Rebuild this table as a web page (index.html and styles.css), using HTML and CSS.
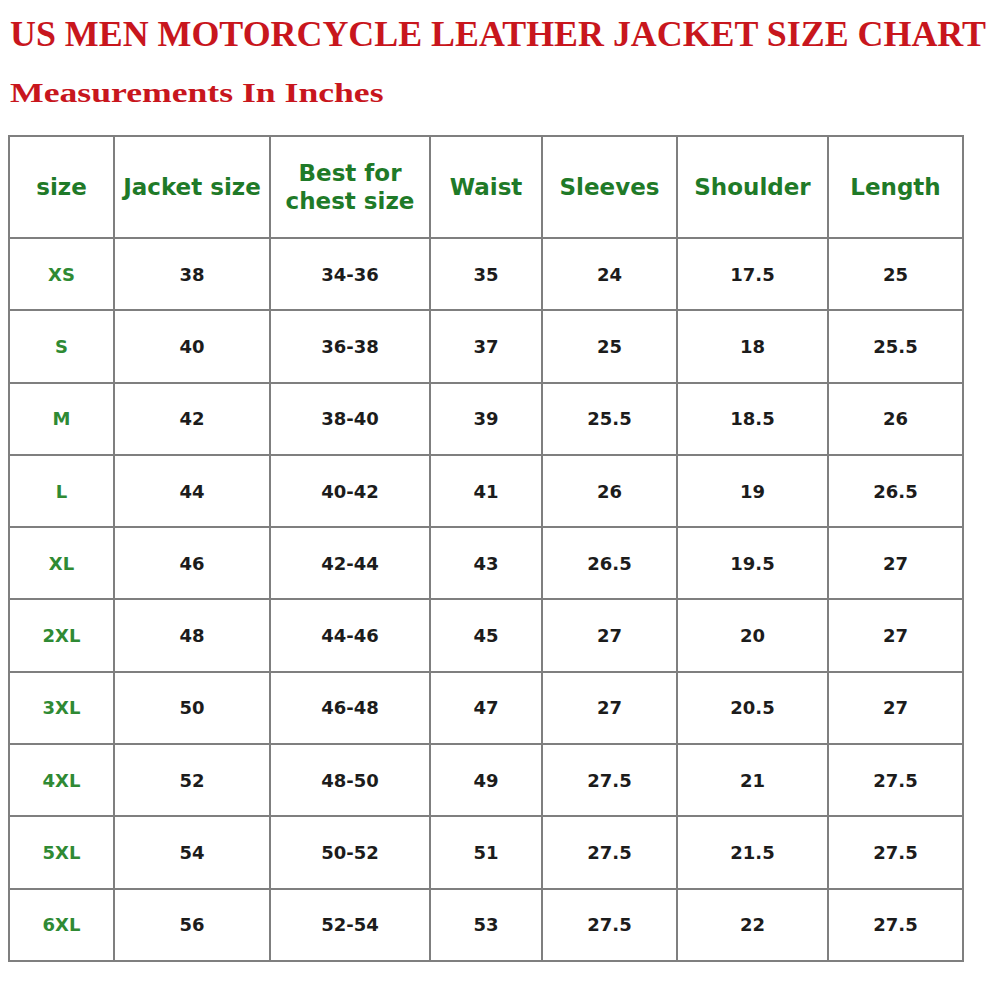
FILE: index.html
```html
<!DOCTYPE html>
<html>
<head>
<meta charset="utf-8">
<link rel="stylesheet" href="styles.css">
</head>
<body>
<div class="page">
  <h1 class="title">US MEN MOTORCYCLE LEATHER JACKET SIZE CHART</h1>
  <h2 class="subtitle"><span class="subtitle-text">Measurements In Inches</span></h2>
  <table class="chart">
    <colgroup>
      <col class="c1"><col class="c2"><col class="c3"><col class="c4"><col class="c5"><col class="c6"><col class="c7">
    </colgroup>
    <thead>
      <tr class="head-row">
        <th>size</th><th>Jacket size</th><th>Best for<br>chest size</th><th>Waist</th><th>Sleeves</th><th>Shoulder</th><th>Length</th>
      </tr>
    </thead>
    <tbody>
      <tr><td class="sz">XS</td><td>38</td><td>34-36</td><td>35</td><td>24</td><td>17.5</td><td>25</td></tr>
      <tr><td class="sz">S</td><td>40</td><td>36-38</td><td>37</td><td>25</td><td>18</td><td>25.5</td></tr>
      <tr><td class="sz">M</td><td>42</td><td>38-40</td><td>39</td><td>25.5</td><td>18.5</td><td>26</td></tr>
      <tr><td class="sz">L</td><td>44</td><td>40-42</td><td>41</td><td>26</td><td>19</td><td>26.5</td></tr>
      <tr><td class="sz">XL</td><td>46</td><td>42-44</td><td>43</td><td>26.5</td><td>19.5</td><td>27</td></tr>
      <tr><td class="sz">2XL</td><td>48</td><td>44-46</td><td>45</td><td>27</td><td>20</td><td>27</td></tr>
      <tr><td class="sz">3XL</td><td>50</td><td>46-48</td><td>47</td><td>27</td><td>20.5</td><td>27</td></tr>
      <tr><td class="sz">4XL</td><td>52</td><td>48-50</td><td>49</td><td>27.5</td><td>21</td><td>27.5</td></tr>
      <tr><td class="sz">5XL</td><td>54</td><td>50-52</td><td>51</td><td>27.5</td><td>21.5</td><td>27.5</td></tr>
      <tr><td class="sz">6XL</td><td>56</td><td>52-54</td><td>53</td><td>27.5</td><td>22</td><td>27.5</td></tr>
    </tbody>
  </table>
</div>
</body>
</html>
```

FILE: styles.css
```css
html, body {
  margin: 0;
  padding: 0;
  background: #ffffff;
}

.page {
  padding-left: 10px;
}

.title {
  margin: 16px 0 0 0;
  font-family: "Liberation Serif", "Times New Roman", serif;
  font-weight: bold;
  font-size: 35.9px;
  line-height: 36px;
  color: #c8161d;
  white-space: nowrap;
}

.subtitle {
  margin: 26px 0 0 0;
  font-family: "Liberation Serif", "Times New Roman", serif;
  font-weight: bold;
  font-size: 27px;
  line-height: 30px;
  color: #c8161d;
  height: 30px;
}

.subtitle-text {
  display: inline-block;
  transform: scaleX(1.32);
  transform-origin: left center;
  white-space: nowrap;
}

.chart {
  margin: 27px 0 0 -2px;
  border-collapse: collapse;
  table-layout: fixed;
  width: 954px;
  font-family: "DejaVu Sans", Verdana, sans-serif;
  font-weight: bold;
}

.c1 { width: 105px; }
.c2 { width: 156px; }
.c3 { width: 160px; }
.c4 { width: 112px; }
.c5 { width: 135px; }
.c6 { width: 151px; }
.c7 { width: 135px; }

.chart th,
.chart td {
  border: 2px solid #7f7f7f;
  text-align: center;
  vertical-align: middle;
  padding: 0;
}

.head-row {
  height: 102px;
}

.chart th {
  font-size: 23px;
  line-height: 28px;
  color: #1f7a28;
  font-weight: bold;
}

.chart tbody tr {
  height: 72.3px;
}

.chart td {
  font-size: 18px;
  color: #1c1c1c;
}

.chart td.sz {
  color: #2f8a34;
  font-size: 18px;
}
```
